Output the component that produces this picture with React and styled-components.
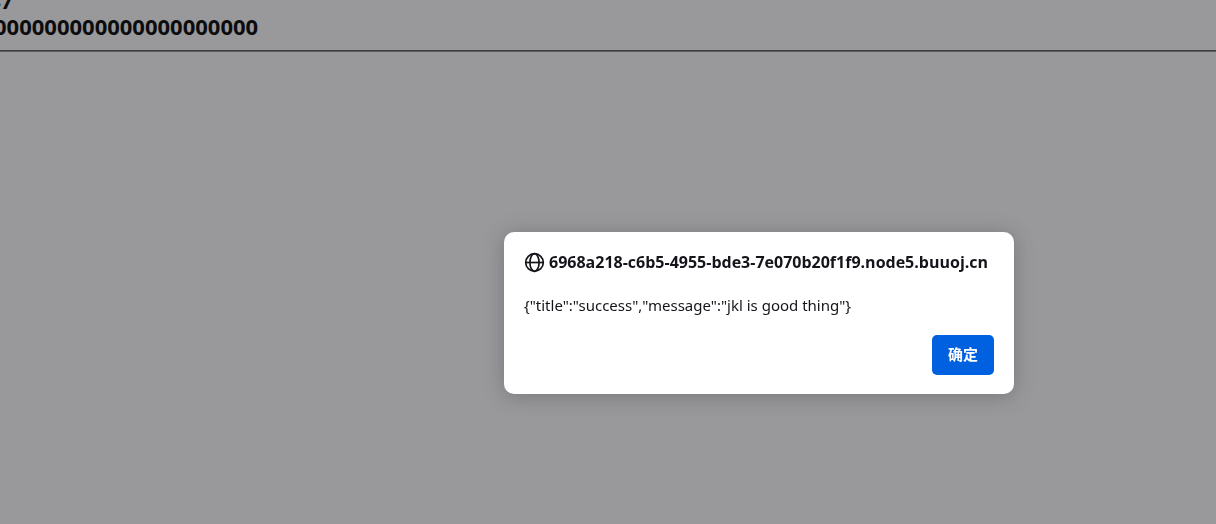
import React from "react";
import styled, { createGlobalStyle } from "styled-components";

const Global = createGlobalStyle`
  * { box-sizing: border-box; }
  body { margin: 0; background: #99999b; color: #0c0c0e; font-family: "Open Sans", "Noto Sans", "Noto Sans CJK SC", sans-serif; overflow: hidden; }
`;
const Page = styled.main`
  min-height: 100vh;
  overflow: hidden;
`;
const Output = styled.header`
  height: 51px;
  display: flex;
  flex-direction: column;
  justify-content: flex-end;
  padding-bottom: 11px;
  border-bottom: 1px solid #3f3f42;
  box-shadow: 0 1px #5c5c5e;
`;
const Line = styled.p`
  margin: 0;
  margin-left: ${(p) => p.$shift}px;
  font-size: 22px;
  line-height: 26px;
  font-weight: 700;
  white-space: nowrap;
`;
const Overlay = styled.div`
  position: fixed;
  inset: 0;
  display: flex;
  justify-content: flex-end;
  align-items: flex-start;
  padding: 232px 202px 0 0;
`;
const Dialog = styled.section`
  width: 510px;
  padding: 18px 20px 19px;
  background: #fff;
  border-radius: 10px;
  box-shadow: 0 2px 20px rgba(58, 57, 68, 0.35);
  color: #15141a;
`;
const Title = styled.h1`
  display: flex;
  align-items: center;
  gap: 4px;
  margin: 0;
  font-size: 16px;
  line-height: 24px;
  font-weight: 700;
  white-space: nowrap;
`;
const Message = styled.p`
  margin: 19px 0 18px;
  font-family: "Noto Sans", sans-serif;
  font-size: 15px;
  line-height: 24px;
`;
const Actions = styled.div`
  display: flex;
  justify-content: flex-end;
`;
const Button = styled.button`
  width: 62px;
  height: 40px;
  border: 0;
  border-radius: 5px;
  padding: 0 0 2px;
  background: #0061e0;
  color: #fff;
  font: 700 15px/20px "Noto Sans CJK SC", sans-serif;
`;
const Globe = () => (
  <svg width="21" height="21" viewBox="0 0 21 21" fill="none" stroke="#15141a" strokeWidth="1.7" aria-hidden="true">
    <circle cx="10.5" cy="10.5" r="8.8" />
    <ellipse cx="10.5" cy="10.5" rx="4.6" ry="8.8" />
    <path d="M1.7 10.5h17.6" />
  </svg>
);
export default function App() {
  return (
    <Page>
      <Global />
      <Output>
        <Line $shift={-12}>47</Line>
        <Line $shift={-6}>000000000000000000000</Line>
      </Output>
      <Overlay>
        <Dialog role="dialog" aria-labelledby="origin">
          <Title id="origin"><Globe />6968a218-c6b5-4955-bde3-7e070b20f1f9.node5.buuoj.cn</Title>
          <Message>{'{"title":"success","message":"jkl is good thing"}'}</Message>
          <Actions><Button type="button">确定</Button></Actions>
        </Dialog>
      </Overlay>
    </Page>
  );
}
